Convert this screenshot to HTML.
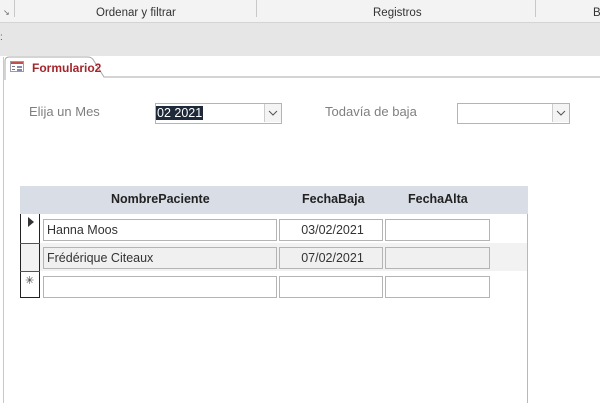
<!DOCTYPE html>
<html><head><style>
body{margin:0;width:600px;height:403px;overflow:hidden;background:#fff;font-family:"Liberation Sans",sans-serif;position:relative}
.a{position:absolute}
.tb{position:absolute;background:#fff;border:1px solid #b4b4b4;box-sizing:border-box;font-size:12.5px;color:#333;line-height:19px;padding-left:3px}
.lbl{position:absolute;font-size:13px;color:#7f7f7f}
.hdr{position:absolute;font-size:12.5px;font-weight:bold;color:#222;top:192px}
.dd{position:absolute;right:0;top:0;width:16px;height:18px;border-left:1px solid #ccc;background:#f4f4f4}
</style></head><body>
<div class="a" style="left:0;top:0;width:600px;height:22px;background:#f3f3f3;border-bottom:1px solid #d4d4d4"></div>
<div class="a" style="left:14px;top:0;width:1px;height:17px;background:#c8c8c8"></div>
<div class="a" style="left:256px;top:0;width:1px;height:17px;background:#c8c8c8"></div>
<div class="a" style="left:535px;top:0;width:1px;height:17px;background:#c8c8c8"></div>
<div class="a" style="left:3px;top:8px;font-size:8px;color:#666">↘</div>
<div class="a" style="left:96px;top:7px;font-size:11.5px;color:#333">Ordenar y filtrar</div>
<div class="a" style="left:373px;top:7px;font-size:11.5px;color:#333">Registros</div>
<div class="a" style="left:593px;top:7px;font-size:11.5px;color:#333">B</div>
<div class="a" style="left:0;top:23px;width:600px;height:33px;background:#e6e6e6"></div>
<div class="a" style="left:0;top:32px;font-size:10px;color:#555">:</div>
<div class="a" style="left:3px;top:57px;width:1px;height:346px;background:#c8c8c8"></div>
<svg class="a" style="left:0;top:55px" width="600" height="26"><path d="M5 25 L5 6 Q5 2 9 2 L88 2 Q92 2 94 6 L104 22 L600 22" fill="#fff" stroke="#a8a8a8"/></svg>
<svg class="a" style="left:10px;top:61px" width="14" height="11"><rect x="0.5" y="0.5" width="13" height="10" fill="#fff" stroke="#9a9ab0"/><rect x="1" y="1" width="12" height="2" fill="#c0504d"/><rect x="2" y="5" width="3" height="1" fill="#778"/><rect x="7" y="5" width="5" height="2" fill="#88a"/><rect x="2" y="8" width="3" height="1" fill="#778"/><rect x="7" y="8" width="5" height="2" fill="#88a"/></svg>
<div class="a" style="left:32px;top:61px;font-size:12px;font-weight:bold;color:#a4262c">Formulario2</div>
<div class="lbl" style="left:29px;top:104px">Elija un Mes</div>
<div class="tb" style="left:155px;top:103px;width:127px;height:21px;padding-left:0"><span style="background:#1e2a3a;color:#fff;padding:0 1px">02 2021</span><div class="dd"><svg width="16" height="18"><path d="M4 7 L8 11 L12 7" fill="none" stroke="#555"/></svg></div></div>
<div class="lbl" style="left:325px;top:104px">Todavía de baja</div>
<div class="tb" style="left:457px;top:103px;width:113px;height:21px"><div class="dd"><svg width="16" height="18"><path d="M4 7 L8 11 L12 7" fill="none" stroke="#555"/></svg></div></div>
<div class="a" style="left:20px;top:186px;width:507px;height:217px;border-right:1px solid #b8b8b8"></div>
<div class="a" style="left:20px;top:186px;width:508px;height:28px;background:#d8dde6"></div>
<div class="hdr" style="left:111px">NombrePaciente</div>
<div class="hdr" style="left:302px">FechaBaja</div>
<div class="hdr" style="left:408px">FechaAlta</div>
<div class="a" style="left:20px;top:243px;width:507px;height:28px;background:#f2f2f2"></div>
<div class="a" style="left:20px;top:214px;width:20px;height:84px;border-left:1px solid #222;border-right:1px solid #222;box-sizing:border-box"></div>
<div class="a" style="left:20px;top:243px;width:20px;height:1px;background:#555"></div>
<div class="a" style="left:20px;top:271px;width:20px;height:1px;background:#555"></div>
<div class="a" style="left:20px;top:297px;width:20px;height:1px;background:#222"></div>
<svg class="a" style="left:27px;top:216px" width="8" height="12"><path d="M1 1 L7 6 L1 11Z" fill="#333"/></svg>
<div class="a" style="left:25px;top:274px;font-size:11px;color:#444">✳</div>
<div class="tb" style="left:43px;top:219px;width:234px;height:22px;line-height:20px">Hanna Moos</div>
<div class="tb" style="left:279px;top:219px;width:104px;height:22px;line-height:20px;text-align:center">03/02/2021</div>
<div class="tb" style="left:385px;top:219px;width:105px;height:22px"></div>
<div class="tb" style="left:43px;top:247px;width:234px;height:22px;line-height:20px;background:#f0f0f0">Frédérique Citeaux</div>
<div class="tb" style="left:279px;top:247px;width:104px;height:22px;line-height:20px;text-align:center;background:#f0f0f0">07/02/2021</div>
<div class="tb" style="left:385px;top:247px;width:105px;height:22px;background:#f0f0f0"></div>
<div class="tb" style="left:43px;top:276px;width:234px;height:22px"></div>
<div class="tb" style="left:279px;top:276px;width:104px;height:22px"></div>
<div class="tb" style="left:385px;top:276px;width:105px;height:22px"></div>
</body></html>
